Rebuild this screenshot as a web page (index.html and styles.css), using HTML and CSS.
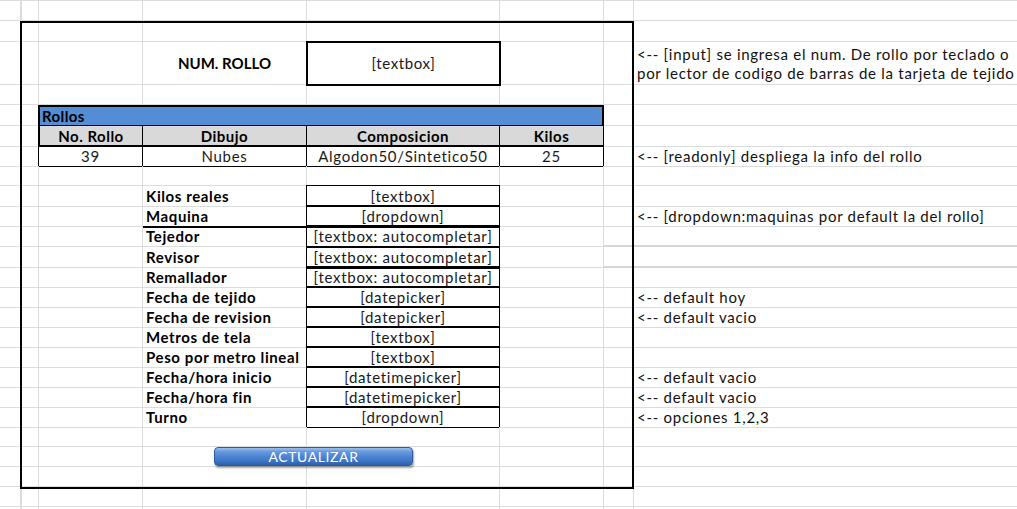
FILE: index.html
```html
<!DOCTYPE html>
<html lang="es">
<head>
<meta charset="utf-8">
<title>Rollos</title>
<link rel="stylesheet" href="styles.css">
</head>
<body>
<div class="sheet">
  <div class="row"><div></div><div></div><div></div><div></div><div></div><div></div><div></div><div></div></div>
  <div class="row h21"><div></div><div></div><div></div><div></div><div></div><div></div><div></div><div></div></div>
  <div class="row h43">
    <div></div><div></div><div></div>
    <div class="big lbl-c">NUM. ROLLO</div>
    <div class="inputbox">[textbox]</div>
    <div></div><div></div>
    <div class="note two">&lt;-- [input] se ingresa el num. De rollo por teclado o<br>por lector de codigo de barras de la tarjeta de tejido</div>
  </div>
  <div class="row"><div></div><div></div><div></div><div></div><div></div><div></div><div></div><div></div></div>
  <div class="row h21">
    <div></div><div></div>
    <div class="bar">Rollos</div>
    <div></div><div></div>
  </div>
  <div class="row">
    <div></div><div></div>
    <div class="hd first">No. Rollo</div>
    <div class="hd">Dibujo</div>
    <div class="hd">Composicion</div>
    <div class="hd">Kilos</div>
    <div></div><div></div>
  </div>
  <div class="row">
    <div></div><div></div>
    <div class="cellb">39</div>
    <div class="cellb">Nubes</div>
    <div class="cellb">Algodon50/Sintetico50</div>
    <div class="cellb">25</div>
    <div></div>
    <div class="note">&lt;-- [readonly] despliega la info del rollo</div>
  </div>
  <div class="row"><div></div><div></div><div></div><div></div><div></div><div></div><div></div><div></div></div>
  <div class="row">
    <div></div><div></div><div></div>
    <div class="lbl">Kilos reales</div>
    <div class="cellb">[textbox]</div>
    <div></div><div></div><div></div>
  </div>
  <div class="row">
    <div></div><div></div><div></div>
    <div class="lbl thickline">Maquina</div>
    <div class="cellb thick">[dropdown]</div>
    <div></div><div></div>
    <div class="note">&lt;-- [dropdown:maquinas por default la del rollo]</div>
  </div>
  <div class="row h21 grayline">
    <div></div><div></div><div></div>
    <div class="lbl">Tejedor</div>
    <div class="cellb thick">[textbox: autocompletar]</div>
    <div></div><div></div><div></div>
  </div>
  <div class="row grayline">
    <div></div><div></div><div></div>
    <div class="lbl">Revisor</div>
    <div class="cellb thick">[textbox: autocompletar]</div>
    <div></div><div></div><div></div>
  </div>
  <div class="row">
    <div></div><div></div><div></div>
    <div class="lbl">Remallador</div>
    <div class="cellb">[textbox: autocompletar]</div>
    <div></div><div></div><div></div>
  </div>
  <div class="row">
    <div></div><div></div><div></div>
    <div class="lbl">Fecha de tejido</div>
    <div class="cellb">[datepicker]</div>
    <div></div><div></div>
    <div class="note">&lt;-- default hoy</div>
  </div>
  <div class="row">
    <div></div><div></div><div></div>
    <div class="lbl">Fecha de revision</div>
    <div class="cellb">[datepicker]</div>
    <div></div><div></div>
    <div class="note">&lt;-- default vacio</div>
  </div>
  <div class="row">
    <div></div><div></div><div></div>
    <div class="lbl">Metros de tela</div>
    <div class="cellb">[textbox]</div>
    <div></div><div></div><div></div>
  </div>
  <div class="row">
    <div></div><div></div><div></div>
    <div class="lbl">Peso por metro lineal</div>
    <div class="cellb">[textbox]</div>
    <div></div><div></div><div></div>
  </div>
  <div class="row">
    <div></div><div></div><div></div>
    <div class="lbl">Fecha/hora inicio</div>
    <div class="cellb">[datetimepicker]</div>
    <div></div><div></div>
    <div class="note">&lt;-- default vacio</div>
  </div>
  <div class="row">
    <div></div><div></div><div></div>
    <div class="lbl">Fecha/hora fin</div>
    <div class="cellb">[datetimepicker]</div>
    <div></div><div></div>
    <div class="note">&lt;-- default vacio</div>
  </div>
  <div class="row">
    <div></div><div></div><div></div>
    <div class="lbl">Turno</div>
    <div class="cellb">[dropdown]</div>
    <div></div><div></div>
    <div class="note">&lt;-- opciones 1,2,3</div>
  </div>
  <div class="row"><div></div><div></div><div></div><div></div><div></div><div></div><div></div><div></div></div>
  <div class="row"><div></div><div></div><div></div><div></div><div></div><div></div><div></div><div></div></div>
  <div class="row"><div></div><div></div><div></div><div></div><div></div><div></div><div></div><div></div></div>
  <div class="row"><div></div><div></div><div></div><div></div><div></div><div></div><div></div><div></div></div>
  <div class="row"><div></div><div></div><div></div><div></div><div></div><div></div><div></div><div></div></div>

  <div class="frame"></div>
  <button class="btn" type="button">ACTUALIZAR</button>
</div>
</body>
</html>
```

FILE: styles.css
```css
html, body {
  margin: 0;
  padding: 0;
  background: #ffffff;
}

body {
  font-family: Lato, "Open Sans", "Liberation Sans", sans-serif;
  font-size: 15px;
  color: #000000;
}

.sheet {
  position: relative;
  width: 1017px;
  height: 509px;
  overflow: hidden;
  box-sizing: border-box;
  border-top: 1px solid #dadcdd;
}

.row {
  display: grid;
  grid-template-columns: 22px 17px 104px 164px 193px 104px 30px 1fr;
  height: 20px;
}

.row.h21 { height: 21px; }
.row.h43 { height: 43px; }

.row > div {
  box-sizing: border-box;
  border-right: 1px solid #dadcdd;
  border-bottom: 1px solid #dadcdd;
  line-height: 20px;
  white-space: nowrap;
  min-width: 0;
}

.row > div:first-child {
  border-right-width: 2px;
}

.row > div:last-child {
  border-right: none;
}

.grayline > div:last-child,
.grayline > div:nth-child(7) {
  border-bottom-width: 2px;
  border-bottom-color: #d6d6d6;
}

.big {
  line-height: 42px !important;
  font-weight: 700;
}

.lbl-c {
  text-align: center;
}

.inputbox {
  margin: -1px;
  border: 2px solid #000000 !important;
  text-align: center;
  line-height: 41px !important;
  color: #1a1a1a;
  letter-spacing: 0.6px;
  position: relative;
}

.note {
  padding-left: 3px;
  color: #111111;
  letter-spacing: 0.72px;
}

.note.two {
  line-height: 18.5px !important;
  padding-top: 3px;
}

.bar {
  grid-column: span 4;
  margin-left: -1px;
  background: #538dd5;
  border: 2px solid #000000 !important;
  border-bottom: 1px solid #000000 !important;
  font-weight: 700;
  line-height: 18px !important;
  padding-left: 2px;
  letter-spacing: 0.4px;
}

.hd {
  margin: -1px 0 0 -1px;
  background: #d9d9d9;
  border: 1px solid #000000 !important;
  text-align: center;
  font-weight: 700;
  letter-spacing: 0.5px;
}

.hd.first {
  border-left-width: 2px !important;
}

.cellb {
  margin: -1px 0 0 -1px;
  border: 1px solid #000000 !important;
  text-align: center;
  color: #1a1a1a;
  letter-spacing: 0.72px;
}

.cellb.thick {
  border-bottom-width: 2px !important;
  margin-bottom: -1px;
}

.lbl {
  font-weight: 700;
  padding-left: 3px;
  letter-spacing: 0.6px;
}

.lbl.thickline {
  border-bottom: 2px solid #000000 !important;
  margin-bottom: -1px;
}

.frame {
  position: absolute;
  left: 20px;
  top: 20px;
  width: 614px;
  height: 468px;
  box-sizing: border-box;
  border: 2px solid #000000;
  pointer-events: none;
}

.btn {
  position: absolute;
  left: 214px;
  top: 446px;
  width: 199px;
  height: 19px;
  box-sizing: border-box;
  margin: 0;
  padding: 0;
  border: 1px solid #2d5a9c;
  border-radius: 4px;
  background: linear-gradient(#9cc0ee 0%, #6a9be0 20%, #4d85d3 50%, #3f76c6 75%, #2e60ae 100%);
  box-shadow: 1px 2px 2px rgba(0, 0, 0, 0.35);
  color: #ffffff;
  font-family: Lato, "Open Sans", sans-serif;
  font-size: 14px;
  letter-spacing: 0.6px;
  line-height: 17px;
  text-align: center;
}
```
